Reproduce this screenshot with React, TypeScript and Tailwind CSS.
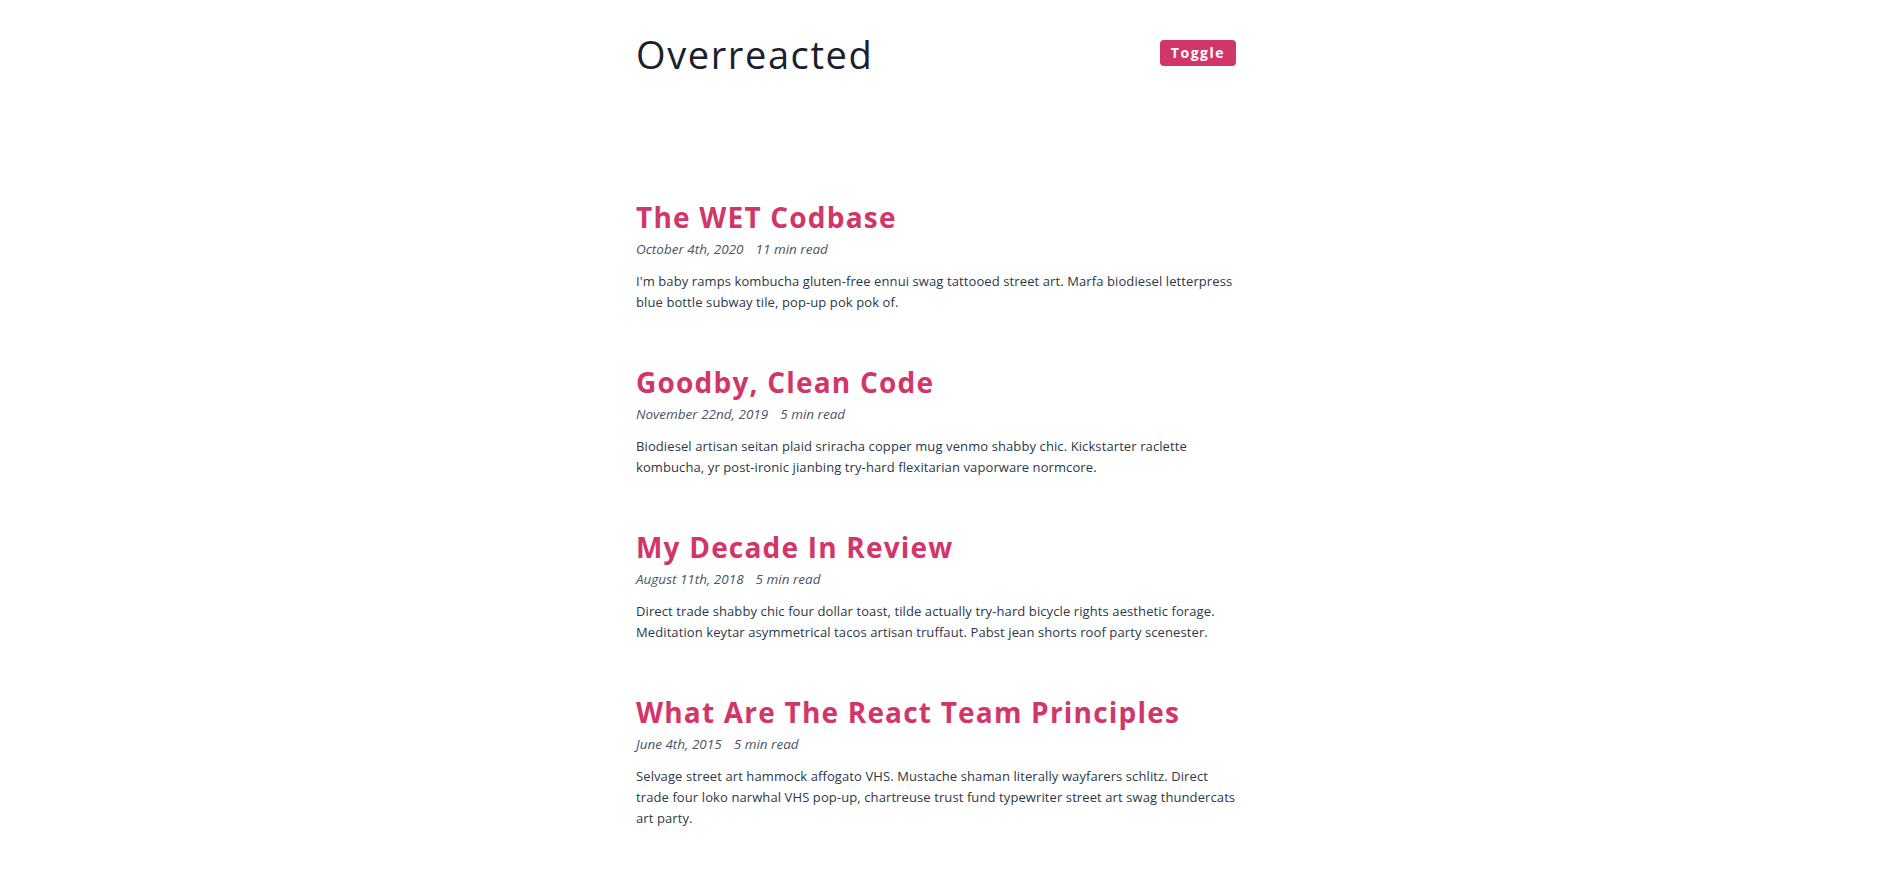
import React from "react";

type Post = { title: string; date: string; read: string; body: string };

const posts: Post[] = [
  {
    title: "The WET Codbase",
    date: "October 4th, 2020",
    read: "11 min read",
    body: "I'm baby ramps kombucha gluten-free ennui swag tattooed street art. Marfa biodiesel letterpress blue bottle subway tile, pop-up pok pok of.",
  },
  {
    title: "Goodby, Clean Code",
    date: "November 22nd, 2019",
    read: "5 min read",
    body: "Biodiesel artisan seitan plaid sriracha copper mug venmo shabby chic. Kickstarter raclette kombucha, yr post-ironic jianbing try-hard flexitarian vaporware normcore.",
  },
  {
    title: "My Decade In Review",
    date: "August 11th, 2018",
    read: "5 min read",
    body: "Direct trade shabby chic four dollar toast, tilde actually try-hard bicycle rights aesthetic forage. Meditation keytar asymmetrical tacos artisan truffaut. Pabst jean shorts roof party scenester.",
  },
  {
    title: "What Are The React Team Principles",
    date: "June 4th, 2015",
    read: "5 min read",
    body: "Selvage street art hammock affogato VHS. Mustache shaman literally wayfarers schlitz. Direct trade four loko narwhal VHS pop-up, chartreuse trust fund typewriter street art swag thundercats art party.",
  },
];

export default function App() {
  return (
    <div className="min-h-screen bg-white font-['Open_Sans',sans-serif]">
      <div className="mx-auto w-[610px] pr-[10px] pt-[31px]">
        <header className="flex items-start justify-between">
          <h1 className="text-[38px] font-normal leading-[46px] tracking-[1.6px] text-[#1a202c]">
            Overreacted
          </h1>
          <button className="mt-[9px] h-[26px] rounded-[4px] bg-[#d23669] px-[11px] text-[14px] font-bold leading-[26px] tracking-[1.5px] text-white">
            Toggle
          </button>
        </header>
        <main className="mt-[122.5px] flex flex-col gap-[51.5px]">
          {posts.map((p) => (
            <article key={p.title}>
              <h2 className="text-[28px] font-bold leading-[34px] tracking-[1.2px] text-[#d23669]">
                {p.title}
              </h2>
              <div className="mt-[5px] flex gap-[12px] text-[13.5px] italic leading-[20px] text-[#4a5568]">
                <span>{p.date}</span>
                <span>{p.read}</span>
              </div>
              <p className="mt-[12.5px] text-[13px] leading-[21px] tracking-[0.1px] text-[#2d3748]">
                {p.body}
              </p>
            </article>
          ))}
        </main>
      </div>
    </div>
  );
}
